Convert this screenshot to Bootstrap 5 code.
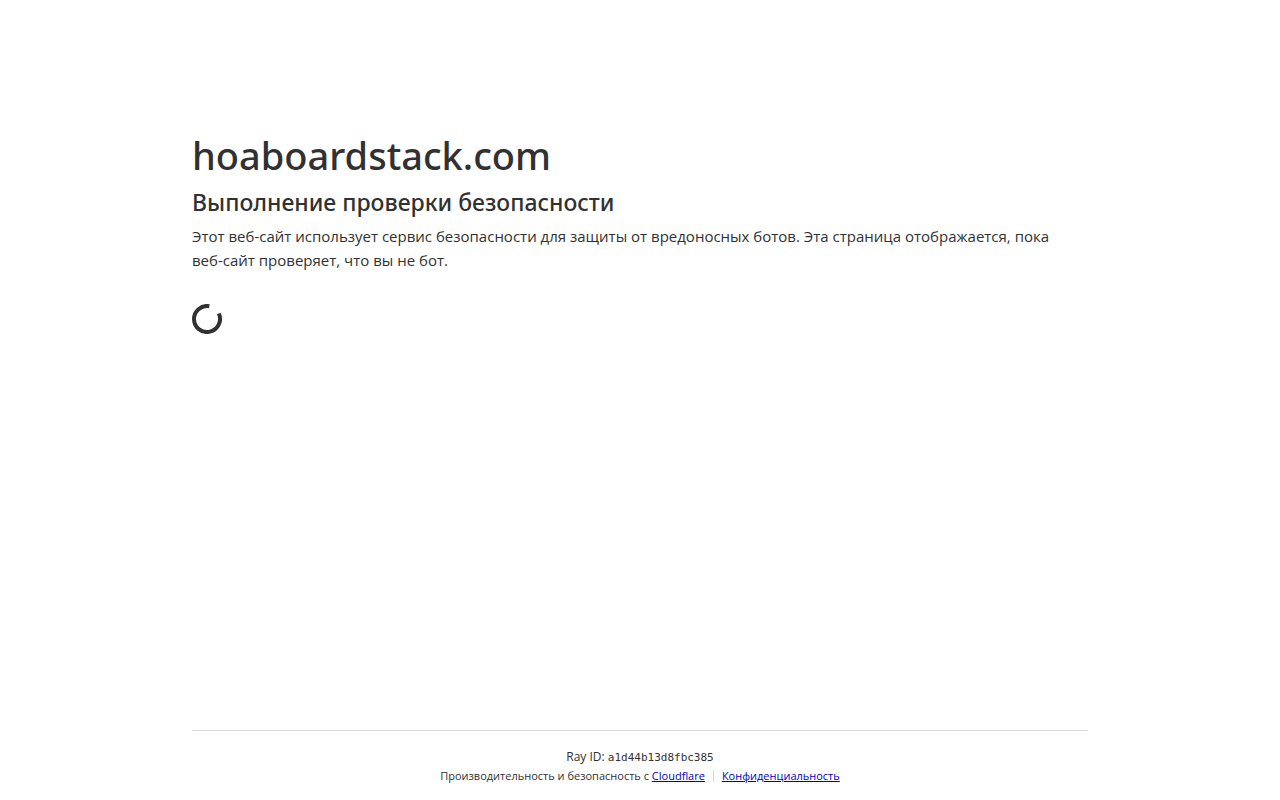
<!DOCTYPE html>
<html lang="ru">
<head>
<meta charset="utf-8">
<meta name="viewport" content="width=device-width, initial-scale=1">
<title>hoaboardstack.com</title>
<link href="https://cdn.jsdelivr.net/npm/bootstrap@5.3.0/dist/css/bootstrap.min.css" rel="stylesheet">
<style>
  body { font-family: "Segoe UI", "Open Sans", "Noto Sans", sans-serif; color: #313131; background: #fff; }
  .page-column { width: 100%; max-width: 60rem; margin: 0 auto; padding: 0 2rem; }
  .page-main { padding-top: 8rem; }
  .site-name, .check-title { font-family: "Segoe UI", "Noto Sans", sans-serif; font-weight: 500; }
  .site-name { font-size: 38px; line-height: 54px; }
  .check-title { font-size: 23px; line-height: 40px; }
  .check-text { font-size: 15px; line-height: 24px; margin-top: 2px; }
  .loader { display: block; width: 30px; height: 30px; margin-top: 32px; }
  .page-footer { border-top: 1px solid #d9d9d9; font-size: 12px; line-height: 18px; padding: 17px 0 15px; }
  .page-footer code { font-family: "DejaVu Sans Mono", monospace; font-size: 11px; color: inherit; }
  .footer-links { font-size: 11px; }
  .page-footer a { color: #0000c8; }
  .footer-divider { width: 1px; height: 12px; background: #d9d9d9; }
</style>
</head>
<body class="d-flex flex-column min-vh-100">
<main class="page-column page-main flex-grow-1">
  <h1 class="site-name mb-0">hoaboardstack.com</h1>
  <h2 class="check-title mb-0">Выполнение проверки безопасности</h2>
  <p class="check-text mb-0">Этот <span class="text-nowrap">веб-сайт</span> использует сервис безопасности для защиты от вредоносных ботов. Эта страница отображается, пока <span class="text-nowrap">веб-сайт</span> проверяет, что вы не бот.</p>
  <svg class="loader" viewBox="0 0 30 30" role="img" aria-label="Загрузка">
    <path d="M17.3 2.2A13 13 0 1 0 26.8 9.5" fill="none" stroke="#313131" stroke-width="4"/>
  </svg>
</main>
<footer class="page-column">
  <div class="page-footer text-center">
    <div>Ray ID: <code>a1d44b13d8fbc385</code></div>
    <div class="footer-links d-flex flex-wrap justify-content-center align-items-center">
      <span>Производительность и безопасность с <a href="#">Cloudflare</a></span>
      <span class="footer-divider mx-2"></span>
      <a href="#">Конфиденциальность</a>
    </div>
  </div>
</footer>
<script src="https://cdn.jsdelivr.net/npm/bootstrap@5.3.0/dist/js/bootstrap.bundle.min.js"></script>
</body>
</html>
